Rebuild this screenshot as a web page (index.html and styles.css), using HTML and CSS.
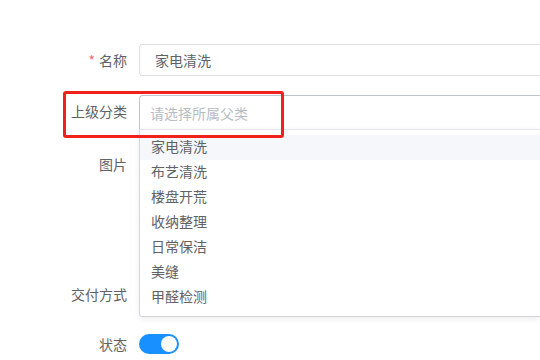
FILE: index.html
```html
<!DOCTYPE html>
<html lang="zh-CN">
<head>
    <meta charset="UTF-8">
    <meta name="viewport" content="width=device-width, initial-scale=1.0">
    <title>分类编辑</title>
    <link rel="stylesheet" href="styles.css">
</head>
<body>
    <form class="form">
        <div class="form-item">
            <label class="form-label required">名称</label>
            <div class="form-content">
                <input type="text" class="input" value="家电清洗">
            </div>
        </div>

        <div class="form-item parent-item">
            <label class="form-label">上级分类</label>
            <div class="form-content">
                <div class="select">
                    <input type="text" class="select-input" placeholder="请选择所属父类" readonly>
                    <ul class="select-dropdown">
                        <li class="option hover">家电清洗</li>
                        <li class="option">布艺清洗</li>
                        <li class="option">楼盘开荒</li>
                        <li class="option">收纳整理</li>
                        <li class="option">日常保洁</li>
                        <li class="option">美缝</li>
                        <li class="option">甲醛检测</li>
                    </ul>
                </div>
            </div>
            <div class="mark"></div>
        </div>

        <div class="form-item image-item">
            <label class="form-label">图片</label>
            <div class="form-content">
                <div class="upload"></div>
            </div>
        </div>

        <div class="form-item">
            <label class="form-label">交付方式</label>
            <div class="form-content">
                <span class="radio"></span>
            </div>
        </div>

        <div class="form-item switch-item">
            <label class="form-label">状态</label>
            <div class="form-content">
                <span class="switch"><span class="switch-knob"></span></span>
            </div>
        </div>
    </form>
</body>
</html>
```

FILE: styles.css
```css
html, body {
    margin: 0;
    padding: 0;
    background: #fff;
    overflow: hidden;
}
body {
    font-family: "Noto Sans CJK SC", "Noto Sans", sans-serif;
    font-size: 14px;
    color: #606266;
}
.form {
    padding-top: 44px;
}
.form-item {
    display: flex;
    align-items: flex-start;
    margin-bottom: 19px;
    position: relative;
}
.form-label {
    width: 139px;
    box-sizing: border-box;
    padding-right: 12px;
    text-align: right;
    line-height: 32px;
    flex-shrink: 0;
}
.form-label.required::before {
    content: "*";
    color: #f56c6c;
    margin-right: 4px;
}
.form-content {
    flex: 1;
    min-width: 0;
    line-height: 32px;
    min-height: 32px;
    display: flex;
    align-items: center;
}
.input {
    width: 100%;
    height: 32px;
    box-sizing: border-box;
    border: 1px solid #dcdfe6;
    border-right: none;
    border-radius: 4px 0 0 4px;
    padding: 0 15px;
    font: inherit;
    color: #606266;
    outline: none;
}
.select {
    position: relative;
    width: 100%;
    z-index: 2;
}
.select-input {
    display: block;
    width: 100%;
    height: 34px;
    box-sizing: border-box;
    border: 1px solid #c0c4cc;
    border-bottom: none;
    border-right: none;
    border-radius: 4px 0 0 0;
    padding: 0 10px;
    font: inherit;
    color: #606266;
    outline: none;
    background: #fff;
}
.select-input::placeholder {
    color: #b8bcc4;
}
.select-dropdown {
    position: absolute;
    top: 100%;
    left: 0;
    right: 0;
    margin: 0;
    padding: 5px 0 6px;
    list-style: none;
    background: #fff;
    border: 1px solid #e4e7ed;
    border-right: none;
    border-left-color: #d4d7de;
    border-bottom-color: #d0d3d8;
    border-radius: 0 0 0 4px;
    box-shadow: 0 2px 6px rgba(0, 0, 0, 0.08);
}
.option {
    height: 25px;
    line-height: 23px;
    padding: 0 11px;
    color: #606266;
}
.option.hover {
    background: #f5f7fa;
}
.mark {
    position: absolute;
    left: 63px;
    top: -4px;
    width: 221px;
    height: 47px;
    box-sizing: border-box;
    border: 3px solid #f2201b;
    border-radius: 3px;
    z-index: 3;
}
.image-item .form-content {
    height: 111px;
    align-items: flex-start;
}
.upload {
    width: 100px;
    height: 100px;
    border: 1px dashed #c0ccda;
    border-radius: 6px;
}
.switch-item {
    margin-bottom: 0;
}
.switch-item .form-label {
    line-height: 30px;
}
.switch-item .form-content {
    min-height: 30px;
    line-height: 30px;
}
.switch {
    display: inline-block;
    position: relative;
    width: 40px;
    height: 20px;
    border-radius: 10px;
    background: #1890ff;
}
.switch-knob {
    position: absolute;
    top: 2px;
    right: 2px;
    width: 16px;
    height: 16px;
    border-radius: 50%;
    background: #fff;
}
```
